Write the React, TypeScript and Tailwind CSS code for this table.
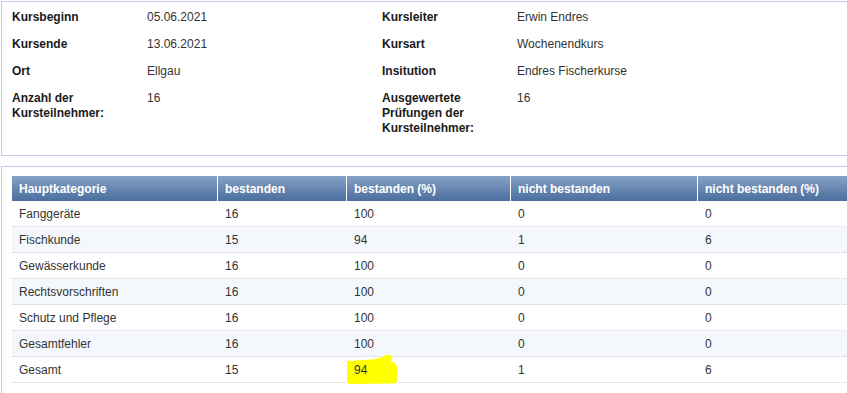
import React from "react";

const info: [string, React.ReactNode, string, React.ReactNode][] = [
  ["Kursbeginn", "05.06.2021", "Kursleiter", "Erwin Endres"],
  ["Kursende", "13.06.2021", "Kursart", "Wochenendkurs"],
  ["Ort", "Ellgau", "Insitution", "Endres Fischerkurse"],
];

const rows = [
  ["Fanggeräte", "16", "100", "0", "0"],
  ["Fischkunde", "15", "94", "1", "6"],
  ["Gewässerkunde", "16", "100", "0", "0"],
  ["Rechtsvorschriften", "16", "100", "0", "0"],
  ["Schutz und Pflege", "16", "100", "0", "0"],
  ["Gesamtfehler", "16", "100", "0", "0"],
  ["Gesamt", "15", "94", "1", "6"],
];

const headers = ["Hauptkategorie", "bestanden", "bestanden (%)", "nicht bestanden", "nicht bestanden (%)"];

function Highlight() {
  return (
    <svg className="absolute left-0 top-[-3px]" width="53" height="32" viewBox="0 0 53 32">
      <path
        d="M1,7 L18,6 L30,5 L36,3 L40,1 L44,0.5 L46,3 L45,8 L49,9 L51,12 L51,27 L49,29.5 L3,30 L1,28 Z"
        fill="#ffff00"
      />
    </svg>
  );
}

export default function App() {
  return (
    <div className="w-[847px] h-[393px] overflow-hidden bg-white font-['Liberation_Sans',Arial,sans-serif] text-[12px]">
      <div className="w-[880px] pl-px pt-px">
        <div className="border border-[#bfcde0] pt-2 pb-[19px] pl-[10px]">
          <div className="grid grid-cols-[135px_235px_135px_1fr] gap-y-3 leading-[15px]">
            {info.map(([a, b, c, d]) => (
              <React.Fragment key={a}>
                <div className="font-bold text-[#1a1a1a]">{a}</div>
                <div className="text-[#333]">{b}</div>
                <div className="font-bold text-[#1a1a1a]">{c}</div>
                <div className="text-[#333]">{d}</div>
              </React.Fragment>
            ))}
            <div className="font-bold text-[#1a1a1a]">
              Anzahl der
              <br />
              Kursteilnehmer:
            </div>
            <div className="text-[#333]">16</div>
            <div className="font-bold text-[#1a1a1a]">
              Ausgewertete
              <br />
              Prüfungen der
              <br />
              Kursteilnehmer:
            </div>
            <div className="text-[#333]">16</div>
          </div>
        </div>

        <div className="mt-[10px] border border-[#bfcde0] pt-[9px] pl-[10px] pb-6">
          <div className="w-[848px]">
            <div className="grid grid-cols-[205px_129px_164px_187px_1fr] h-[25px] bg-linear-to-b from-[#87a2c4] to-[#4a6e9f] text-white font-bold">
              {headers.map((h, i) => (
                <div
                  key={h}
                  className={
                    i === 0
                      ? "flex items-center pl-[7px]"
                      : "flex items-center pl-[7px] border-l border-white"
                  }
                >
                  {h}
                </div>
              ))}
            </div>
            {rows.map((r, ri) => (
              <div
                key={r[0]}
                className={
                  ri % 2 === 1
                    ? "grid grid-cols-[205px_129px_164px_187px_1fr] h-[26px] border-b border-dotted border-[#c5d2e4] bg-[#f4f8fd] text-[#333]"
                    : "grid grid-cols-[205px_129px_164px_187px_1fr] h-[26px] border-b border-dotted border-[#c5d2e4] bg-white text-[#333]"
                }
              >
                {r.map((c, ci) => (
                  <div
                    key={ci}
                    className={ci === 0 ? "flex items-center pl-[7px]" : "relative flex items-center pl-2"}
                  >
                    {ri === 6 && ci === 2 ? <Highlight /> : null}
                    <span className="relative">{c}</span>
                  </div>
                ))}
              </div>
            ))}
          </div>
        </div>
      </div>
    </div>
  );
}
